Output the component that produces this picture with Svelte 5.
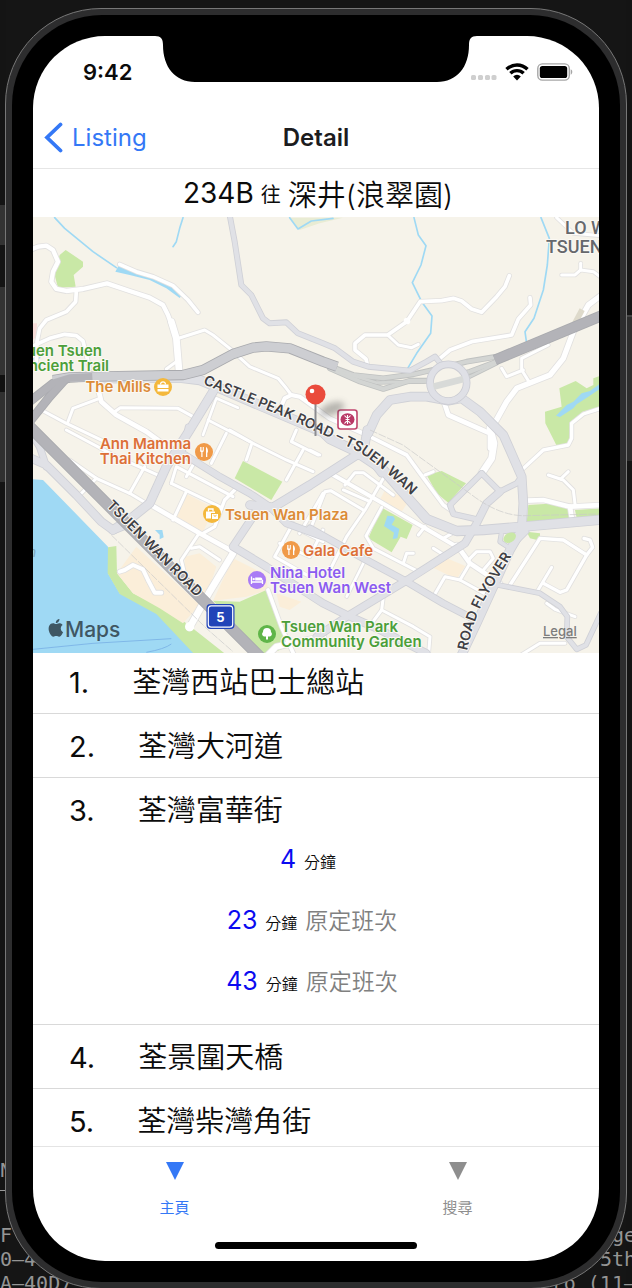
<script>
  const stops = [
    { n: 1, name: '荃灣西站巴士總站', etas: [] },
    { n: 2, name: '荃灣大河道', etas: [] },
    {
      n: 3,
      name: '荃灣富華街',
      etas: [
        { min: 4, remark: '' },
        { min: 23, remark: '原定班次' },
        { min: 43, remark: '原定班次' }
      ]
    },
    { n: 4, name: '荃景圍天橋', etas: [] },
    { n: 5, name: '荃灣柴灣角街', etas: [] }
  ];

  const tabs = [
    { label: '主頁', active: true },
    { label: '搜尋', active: false }
  ];

  // Map geometry is kept in four tiles, three units to a pixel.
  const tiles = {
    nw: 'translate(0 0)',
    ne: 'translate(831 0)',
    sw: 'translate(0 645)',
    se: 'translate(831 645)'
  };

  const areas = [
    { t: 'sw', c: '#9fd9f4', d: '0,148 30,150 225,350 225,430 260,490 370,550 500,675 0,675' },
    { t: 'sw', c: '#c9e8a6', d: '225,352 250,348 252,430 300,490 400,540 460,580 600,690 500,690 370,552 260,492 224,430' },
    { t: 'sw', c: '#fbeed9', d: '252,430 310,350 500,525 450,580 380,535 300,490' },
    { t: 'sw', c: '#fbeed9', d: '455,380 500,370 550,410 520,500 455,430' },
    { t: 'sw', c: '#fbeed9', d: '600,385 700,435 705,480 640,500 540,512' },
    { t: 'sw', c: '#fbeed9', d: '455,190 545,235 510,305 430,265' },
    { t: 'sw', c: '#fbeed9', d: '730,490 805,515 770,540 740,530' },
    { t: 'sw', c: '#c9e8a6', d: '540,512 620,515 700,480 715,485 765,650 690,680 660,640' },
    { t: 'sw', c: '#c9e8a6', d: '630,93 748,155 715,210 605,145' },
    { t: 'sw', c: '#9fd9f4', d: '366,300 388,300 392,322 380,328 380,314' },
    { t: 'nw', c: '#c9e8a6', d: '98,105 150,140 150,155 122,180 128,215 75,218 65,180 80,120' },
    { t: 'nw', c: '#f7dcd8', d: '0,325 12,325 10,365 0,375' },
    { t: 'nw', c: '#e9ecd4', d: '770,8 930,8 860,25 800,45' },
    { t: 'nw', c: '#9fd9f4', d: '258,150 300,168 360,185 420,210 447,240 440,249 400,220 350,195 290,180 247,170' },
    { t: 'ne', c: '#c9e8a6', d: '872,482 850,490 850,510 830,520 797,498 748,520 755,575 705,590 706,625 740,692 775,690 785,620 820,590 872,575' },
    { t: 'ne', c: '#9fd9f4', d: '872,505 840,528 815,535 790,560 770,570 738,602 750,606 790,580 800,568 835,545 872,520' },
    { t: 'se', c: '#c9e8a6', d: '350,135 395,123 468,160 415,218 380,190' },
    { t: 'se', c: '#c9e8a6', d: '655,225 740,220 775,240 785,265 650,278' },
    { t: 'se', c: '#c9e8a6', d: '795,240 872,235 872,256 800,264' },
    { t: 'se', c: '#c9e8a6', d: '650,305 690,310 690,332 660,325' },
    { t: 'se', c: '#c9e8a6', d: '215,233 308,285 290,327 272,320 245,367 175,325' },
    { t: 'se', c: '#9fd9f4', d: '232,257 250,259 255,268 245,284 268,297 262,325 248,327 252,308 222,288' },
    { t: 'se', c: '#fbeed9', d: '225,180 300,208 275,245 208,212' },
    { t: 'se', c: '#fbeed9', d: '400,380 466,408 440,447 372,415' }
  ];

  const streams = [
    { t: 'nw', d: '65,8 95,40 180,110 250,158' },
    { t: 'nw', d: '450,8 440,40 430,80 420,95' },
    { t: 'nw', d: '770,8 795,42 835,18 900,10' },
    { t: 'nw', d: '0,432 20,428' },
    { t: 'ne', d: '312,8 325,60 348,92 333,150 307,203 335,260 366,303 362,355 320,415 293,460' },
    { t: 'ne', d: '693,8 718,70 712,150 700,225 672,310 645,350 650,385' }
  ];

  const minor = [
    { t: 'nw', w: 13, d: '-10,105 15,95 40,92 60,105 75,140 60,170 55,200 70,222 100,228 150,222 222,205 290,228 350,248 390,270 405,300 430,370' },
    { t: 'nw', w: 20, d: '415,320 430,370 438,465' },
    { t: 'nw', w: 11, d: '260,148 310,170 360,185 420,212 465,255 495,292' },
    { t: 'nw', w: 11, d: '130,228 128,260 100,290 40,315 20,340 12,380 10,440' },
    { t: 'nw', w: 11, d: '-5,395 50,370 95,358 130,362 150,378 170,460' },
    { t: 'nw', w: 9, d: '430,372 515,345 540,360 590,400 650,455 735,490 760,520 775,540' },
    { t: 'nw', w: 12, d: '740,585 755,550 775,540 800,545 890,610 990,655' },
    { t: 'nw', w: 9, d: '400,462 430,440' },
    { t: 'nw', w: 14, d: '195,520 205,560 250,600 340,650 395,690' },
    { t: 'nw', w: 9, d: '105,620 120,580 200,550' },
    { t: 'nw', w: 9, d: '245,590 262,578 435,580 480,605' },
    { t: 'nw', w: 9, d: '25,585 100,625 215,680' },
    { t: 'nw', w: 8, d: '510,660 550,550 615,578' },
    { t: 'nw', w: 8, d: '525,615 650,680' },
    { t: 'ne', w: 11, d: '172,450 168,432 135,405 135,385 165,360 233,360 290,320 330,260 395,257 430,250 455,258 485,282 515,292 560,245 585,215 598,182' },
    { t: 'ne', w: 9, d: '233,360 265,390 305,398 325,388' },
    { t: 'ne', w: 11, d: '390,430 420,405 485,380 605,360 625,312 662,270 660,248' },
    { t: 'ne', w: 9, d: '715,390 635,430 635,465 660,505' },
    { t: 'ne', w: 9, d: '575,460 590,485 640,465' },
    { t: 'ne', w: 16, d: '875,240 835,270 790,350 760,430 720,480 620,520 590,560 540,650' },
    { t: 'ne', w: 14, d: '400,555 415,600 540,655 540,700' },
    { t: 'ne', w: 9, d: '740,8 790,55 870,62' },
    { t: 'ne', w: 9, d: '755,180 795,180 812,165 850,170 870,185' },
    { t: 'ne', w: 9, d: '812,165 812,145' },
    { t: 'ne', w: 10, d: '872,580 820,597 785,625 785,670 775,690 700,705 635,765' },
    { t: 'se', w: 20, d: '540,-5 552,40 545,85 515,130' },
    { t: 'se', w: 11, d: '180,20 290,75 330,130 400,225 430,245' },
    { t: 'se', w: 9, d: '345,135 370,125' },
    { t: 'se', w: 14, d: '650,212 700,210 780,230 870,225' },
    { t: 'se', w: 14, d: '780,230 785,262' },
    { t: 'se', w: 9, d: '795,222 790,180 760,150 715,135' },
    { t: 'se', w: 9, d: '752,147 775,125' },
    { t: 'se', w: 10, d: '600,465 690,325 760,330 830,375 770,480 750,487 700,460' },
    { t: 'se', w: 9, d: '680,487 725,412' },
    { t: 'se', w: 10, d: '830,375 848,352 840,330 822,325' },
    { t: 'se', w: 9, d: '710,520 735,538 795,560' },
    { t: 'se', w: 9, d: '625,680 690,640 765,640' },
    { t: 'se', w: 14, d: '440,345 480,400 570,460' },
    { t: 'se', w: 9, d: '480,400 450,450 405,440 370,500' },
    { t: 'se', w: 9, d: '450,450 540,500' },
    { t: 'se', w: 9, d: '480,385 500,365 540,365 550,385 520,420' },
    { t: 'se', w: 12, d: '70,135 210,215 320,280 440,350' },
    { t: 'se', w: 9, d: '220,145 165,240 110,320 60,420' },
    { t: 'se', w: 9, d: '0,300 45,185 62,182 160,240' },
    { t: 'se', w: 9, d: '105,165 135,128 160,128 250,195' },
    { t: 'se', w: 9, d: '100,180 180,215' },
    { t: 'se', w: 9, d: '215,232 168,318 190,355 325,425' },
    { t: 'se', w: 9, d: '345,290 325,315' },
    { t: 'se', w: 9, d: '370,355 410,380' },
    { t: 'se', w: 9, d: '280,400 290,370 310,370' },
    { t: 'se', w: 9, d: '400,325 435,305' },
    { t: 'se', w: 9, d: '220,500 215,540 310,590 360,620 355,680' },
    { t: 'se', w: 9, d: '215,540 185,580' },
    { t: 'se', w: 8, d: '165,390 110,500' },
    { t: 'se', w: 8, d: '0,60 30,75' },
    { t: 'sw', w: 9, d: '110,90 190,145 290,190 340,220' },
    { t: 'sw', w: 9, d: '190,145 140,195' },
    { t: 'sw', w: 9, d: '290,190 335,110' },
    { t: 'sw', w: 9, d: '100,0 250,80 385,140' },
    { t: 'sw', w: 14, d: '345,220 500,310 600,365' },
    { t: 'sw', w: 9, d: '415,160 430,110 600,200' },
    { t: 'sw', w: 9, d: '415,160 560,230' },
    { t: 'sw', w: 9, d: '460,185 420,270' },
    { t: 'sw', w: 9, d: '480,105 460,140' },
    { t: 'sw', w: 9, d: '535,100 580,10' },
    { t: 'sw', w: 10, d: '510,310 545,290 575,210 605,180' },
    { t: 'sw', w: 9, d: '495,315 445,390 455,430 480,470' },
    { t: 'sw', w: 9, d: '475,355 500,350 560,390' },
    { t: 'sw', w: 20, d: '600,370 530,485 470,592' },
    { t: 'sw', w: 12, d: '260,425 275,420 300,405 330,418 345,450 365,488 385,488' },
    { t: 'sw', w: 9, d: '590,0 660,40 760,90 840,125' },
    { t: 'sw', w: 9, d: '655,45 640,90' },
    { t: 'sw', w: 9, d: '810,60 760,150' },
    { t: 'sw', w: 9, d: '790,0 775,35 855,75' },
    { t: 'sw', w: 9, d: '780,280 725,380 830,440' },
    { t: 'sw', w: 9, d: '800,300 870,335' },
    { t: 'sw', w: 9, d: '870,190 800,310' },
    { t: 'sw', w: 9, d: '870,300 830,380 740,340' },
    { t: 'sw', w: 11, d: '705,480 745,590 790,690' },
    { t: 'sw', w: 18, d: '700,680 730,650 870,620' }
  ];

  const major = [
    { t: 'nw', w: 13, d: '590,0 605,80 625,210 655,240 690,310 710,325 760,322 795,355 870,385 906,400 960,440 1006,455 1131,467 1181,440 1206,425 1226,450' },
    { t: 'nw', w: 26, d: '210,490 440,488 500,495 560,520 870,652 891,672 961,705 1051,765 1121,845 1181,912 1271,948 1351,945 1471,935 1705,914' },
    { t: 'ne', w: 24, d: '175,655 200,600 240,555 300,545 350,545 415,557 455,550 510,590 580,660 600,705 635,785 640,865 635,945 600,1005 500,1225 450,1330' },
    { t: 'se', w: 24, d: '172,0 165,40 140,75 0,165 -111,232 -180,225' },
    { t: 'se', w: 20, d: '215,130 180,85 140,75' },
    { t: 'se', w: 14, d: '515,130 420,225 430,252 500,268' },
    { t: 'se', w: 14, d: '515,130 570,185 620,160 635,140' },
    { t: 'se', w: 20, d: '570,185 530,220 500,280 465,340 300,445 110,560 20,620' },
    { t: 'se', w: 18, d: '0,295 160,385 290,455 400,520 500,572' },
    { t: 'se', w: 12, d: '565,465 690,490 750,530 772,560 770,620 800,658 828,645 872,550' },
    { t: 'se', w: 11, d: '650,305 600,355 570,335 575,305 620,300' },
    { t: 'nw', w: 24, d: '540,530 470,645 400,755 350,865 300,905 240,945' },
    { t: 'sw', w: 18, d: '440,65 560,140 650,190 710,230 760,280 870,320' },
    { t: 'sw', w: 20, d: '680,220 660,260 600,350 700,410 870,520 941,555 1031,595 1180,670' },
    { t: 'sw', w: 22, d: '-5,85 40,105 130,195 205,275 240,300 290,280' },
    { t: 'sw', w: 18, d: '-5,10 20,50 40,110' },
    { t: 'sw', w: 14, d: '465,-10 450,60' }
  ];

  const rails = [
    { t: 'ne', w: 12, d: '50,450 130,480 220,490 310,478 390,460 470,440 560,425' },
    { t: 'ne', w: 12, d: '60,460 150,500 220,522 300,497 380,497 480,470 560,440' },
    { t: 'ne', w: 8, d: '90,470 200,503 340,500 480,485 560,445' }
  ];

  const highway = [
    { t: 'nw', w: 26, c: '#cdced2', d: '60,495 110,487 180,485 450,480 510,465 600,417 660,398 700,394 770,400 870,440 912,455' },
    { t: 'nw', w: 22, c: '#b3b3b8', d: '-10,560 60,505 110,489 178,485' },
    { t: 'nw', w: 22, c: '#b3b3b8', d: '-10,620 50,545 95,495' },
    { t: 'nw', w: 30, c: '#b3b3b8', d: '-20,625 200,845 520,1165 700,1345' },
    { t: 'ne', w: 28, c: '#b3b3b8', d: '555,435 875,302' }
  ];

  const pinLabels = [
    { x: 118, y: 175, c: '#dc8b37', a: 'end', lines: ['The Mills'] },
    { x: 158, y: 232, c: '#dd7038', a: 'end', lines: ['Ann Mamma', 'Thai Kitchen'] },
    { x: 192, y: 303, c: '#dc8b37', a: 'start', lines: ['Tsuen Wan Plaza'] },
    { x: 270, y: 339, c: '#dd7038', a: 'start', lines: ['Gala Cafe'] },
    { x: 237, y: 361, c: '#8b5cf0', a: 'start', lines: ['Nina Hotel', 'Tsuen Wan West'] },
    { x: 248, y: 415, c: '#4c9f3a', a: 'start', lines: ['Tsuen Wan Park', 'Community Garden'] },
    { x: 69, y: 139, c: '#4c9f3a', a: 'end', lines: ['Yuen Tsuen'] },
    { x: 76, y: 154, c: '#4c9f3a', a: 'end', lines: ['Ancient Trail'] }
  ];
</script>

{#snippet roads(list, kind)}
  <g class="{kind} casing">
    {#each list as r}
      <polyline points={r.d} transform={tiles[r.t]} stroke-width={r.w + 5} />
    {/each}
  </g>
  <g class="{kind} fill">
    {#each list as r}
      <polyline points={r.d} transform={tiles[r.t]} stroke-width={r.w} stroke={r.c} />
    {/each}
  </g>
{/snippet}

<div class="backdrop">
  <div class="code left" aria-hidden="true">
    <span class="ruled">N</span>
    <span>F</span>
    <span>0–40</span>
    <span>A–40D7</span>
  </div>
  <div class="code right" aria-hidden="true">
    <span>ge</span>
    <span>5th</span>
    <span>ro (11–</span>
  </div>

  <div class="device">
    <div class="bezel">
      <main class="screen">
        <svg class="notch" viewBox="0 0 322 46" aria-hidden="true">
          <path d="M0 0C6 0 8 3 8 9C8 31 20 46 40 46H282C302 46 314 31 314 9C314 3 316 0 322 0Z" />
        </svg>

        <div class="status">
          <time>9:42</time>
          <div class="signals">
            <svg width="26" height="18" viewBox="0 0 26 18" aria-hidden="true">
              <g fill="#cfcfcf">
                <rect x="0" y="12" width="5" height="5" rx="1.6" />
                <rect x="7" y="12" width="5" height="5" rx="1.6" />
                <rect x="14" y="12" width="5" height="5" rx="1.6" />
                <rect x="20.500" y="12" width="5" height="5" rx="1.6" />
              </g>
            </svg>
            <svg width="24" height="18" viewBox="0 0 24 18" aria-hidden="true">
              <g fill="none" stroke="#000" stroke-width="3.400">
                <path d="M1.500 6.300A15 15 0 0 1 22.500 6.300" />
                <path d="M5.400 10.300A9.400 9.400 0 0 1 18.600 10.300" />
              </g>
              <path d="M8.200 13.400A5.400 5.400 0 0 1 15.800 13.400L12 17.400Z" />
            </svg>
            <svg width="36" height="18" viewBox="0 0 36 18" aria-hidden="true">
              <rect x="0.800" y="0.900" width="31.500" height="16.200" rx="4.600" fill="none" stroke="#a6a6a6" stroke-width="1.400" />
              <rect x="2.800" y="3" width="27.400" height="12" rx="2.600" />
              <path d="M33.700 6.300C35.800 7 35.800 11 33.700 11.700Z" fill="#a6a6a6" />
            </svg>
          </div>
        </div>

        <header class="nav">
          <button class="back" type="button">
            <svg width="20" height="32" viewBox="0 0 20 32" aria-hidden="true">
              <path d="M16.500 2.500L3 15.500L16.500 28.500" fill="none" stroke="#3478f6" stroke-width="3.800" stroke-linecap="round" stroke-linejoin="miter" />
            </svg>
            <span>Listing</span>
          </button>
          <h1>Detail</h1>
        </header>

        <h2 class="route">
          <span>234B</span><small>往</small><span>深井(浪翠園)</span>
        </h2>

        <svg class="map" viewBox="0 0 566 436" preserveAspectRatio="xMidYMid slice" role="img" aria-label="Tsuen Wan">
          <rect width="566" height="436" fill="#f6f3ea" />
          <g transform="translate(0 -2) scale(0.33333)">
            {#each areas as a}
              <polygon points={a.d} fill={a.c} transform={tiles[a.t]} />
            {/each}
            <g fill="none" stroke="#7fb8e8" stroke-width="3">
              <path d="M0 1303L180 1285L415 1271" />
              <path d="M340 1312Q395 1302 415 1287" />
            </g>
            <g class="stream">
              {#each streams as s}
                <polyline points={s.d} transform={tiles[s.t]} />
              {/each}
            </g>
            {@render roads(minor, 'minor')}
            <circle cx="470" cy="1235" r="14" fill="#fff" />
            <circle cx="1122" cy="318" r="10" fill="#fff" />
            {@render roads(rails, 'rail')}
            {@render roads(major, 'major')}
            <circle cx="1246" cy="503" r="55" fill="#f6f3ea" stroke="#cbccd3" stroke-width="23" />
            <path d="M1200 515L1292 492" stroke="#d8dad8" stroke-width="20" />
            <circle cx="1246" cy="503" r="55" fill="none" stroke="#dfe0e6" stroke-width="18" />
            <ellipse cx="1430" cy="968" rx="20" ry="14" transform="rotate(-30 1430 968)" fill="#c9e8a6" />
            <path d="M1640 280L1655 288L1628 340L1612 332Z" fill="#dedacb" />
            {@render roads(highway, 'highway')}
            <g class="track">
              <path d="M235 960L520 1240L600 1310" />
              <path d="M1011 645L1110 690L1310 835Q1400 905 1480 902L1698 897" />
            </g>
          </g>

          <path id="castle" d="M170 167Q205 181 254 201Q300 222 326 235Q352 252 384 284Q400 302 420 326" fill="none" />
          <path id="tsuen" d="M73 289L190 407" fill="none" />
          <path id="flyover" d="M434 434Q441 401 452 382L500 304" fill="none" />
          <g class="street">
            <text><textPath href="#castle">CASTLE PEAK ROAD – TSUEN WAN</textPath></text>
            <text><textPath href="#tsuen">TSUEN WAN ROAD</textPath></text>
            <text><textPath href="#flyover">ROAD FLYOVER</textPath></text>
          </g>
          <g class="district">
            <text x="532" y="17">LO WAI</text>
            <text x="513" y="36">TSUEN WAN</text>
          </g>
          <text x="-5" y="340" class="bay">n</text>

          <g class="poi">
            {#each pinLabels as p}
              <text fill={p.c} text-anchor={p.a}>
                {#each p.lines as line, i}
                  <tspan x={p.x} y={p.y + i * 15}>{line}</tspan>
                {/each}
              </text>
            {/each}
          </g>

          <g transform="translate(130 170)">
            <circle r="9" fill="#f4b83c" />
            <path d="M-5.500 -2.500H5.500V1H-5.500ZM-5.500 2H5.500V4.500H-5.500Z" fill="#fff" />
            <path d="M-2.500 -2.500C-2.500 -6 2.500 -6 2.500 -2.500" fill="none" stroke="#fff" stroke-width="1.200" />
          </g>
          {#each [[171, 235], [258, 333]] as [x, y]}
            <g transform="translate({x} {y})">
              <circle r="9" fill="#f09a48" />
              <path d="M-4 -5V-1.500Q-4 0 -2.700 0V5H-1.500V0Q-0.200 0 -0.200 -1.500V-5H-1V-1.500H-1.700V-5H-2.500V-1.500H-3.200V-5Z" fill="#fff" />
              <path d="M2 5V-5Q4.300 -4 3.900 0.500H3.300V5Z" fill="#fff" />
            </g>
          {/each}
          <g transform="translate(179 297)">
            <circle r="9" fill="#f4b83c" />
            <path d="M-6 -2.500H3V-1H-1V4.500H-6ZM0 0H6V5H0Z" fill="#fff" />
            <path d="M-3.500 -2.500V-5H1V-2.500" fill="none" stroke="#fff" stroke-width="1.300" />
            <path d="M1.500 1.200Q3 3.600 4.500 1.200" fill="none" stroke="#f4b83c" />
          </g>
          <g transform="translate(224 363)">
            <circle r="9" fill="#a97bf5" />
            <path d="M-5.500 -3.500V4M-5.500 2H5.500M5.500 4V0" fill="none" stroke="#fff" stroke-width="1.300" />
            <path d="M-1.800 -2.500H3.500Q5.500 -2.500 5.500 0.500H-1.800Z" fill="#fff" />
            <circle cx="-3.300" cy="-0.900" r="1.200" fill="#fff" />
          </g>
          <g transform="translate(234 417)">
            <circle r="9" fill="#5fb548" />
            <path d="M-1 5.500V2.500H-3A2.600 2.600 0 0 1 -4 -2A4 4 0 0 1 4 -2A2.600 2.600 0 0 1 3 2.500H1V5.500Z" fill="#fff" />
          </g>

          <g transform="translate(187.500 399.500)">
            <rect x="-14" y="-12.500" width="28" height="25" rx="4" fill="#2244b8" />
            <rect x="-12.200" y="-10.700" width="24.400" height="21.400" rx="3" fill="none" stroke="#fff" stroke-width="1.200" />
            <text class="shield" y="5" text-anchor="middle">5</text>
          </g>

          <g transform="translate(314.500 202.500)">
            <rect x="-9.500" y="-9.500" width="19" height="19" rx="2.500" fill="#fff" stroke="#c0456d" stroke-width="1.600" />
            <ellipse rx="7" ry="6.200" fill="#b93866" />
            <path d="M0 -4.500V4.500M-3 -4Q0 0.500 3 -4M-3 4Q0 -0.500 3 4M-2 0H2" fill="none" stroke="#fff" stroke-width="1.100" />
          </g>

          <ellipse class="shade" cx="299" cy="192" rx="13" ry="6" transform="rotate(-20 299 192)" />
          <path d="M282.500 186V219" stroke="#8c8c90" stroke-width="2" />
          <circle cx="282.500" cy="177.500" r="10" fill="#ea4b3c" />
          <circle cx="279" cy="174" r="2.300" fill="#fff" />

          <g class="brand">
            <path transform="translate(14 402) scale(0.74)" d="M12.152 6.896c-.948 0-2.415-1.078-3.960-1.040-2.040.027-3.910 1.183-4.961 3.014-2.117 3.675-.546 9.103 1.519 12.090 1.013 1.454 2.208 3.090 3.792 3.039 1.520-.065 2.090-.987 3.935-.987 1.831 0 2.350.987 3.960.948 1.637-.026 2.676-1.480 3.676-2.948 1.156-1.688 1.636-3.325 1.662-3.415-.039-.013-3.182-1.221-3.220-4.857-.026-3.040 2.480-4.494 2.597-4.559-1.429-2.090-3.623-2.324-4.390-2.376-2-.156-3.675 1.090-4.610 1.090zM15.530 3.830c.843-1.012 1.400-2.427 1.245-3.830-1.207.052-2.662.805-3.532 1.818-.780.896-1.454 2.338-1.273 3.714 1.338.104 2.715-.688 3.559-1.701" />
            <text x="32" y="420">Maps</text>
          </g>
          <a href="#legal"><text class="legal" x="510" y="419">Legal</text></a>
        </svg>

        <ol class="stops">
          {#each stops as s}
            <li>
              <div class="stop"><span>{s.n}.</span><span>{s.name}</span></div>
              {#if s.etas.length}
                <div class="etas">
                  {#each s.etas as e}
                    <p><b>{e.min}</b><small>分鐘</small><i>{e.remark}</i></p>
                  {/each}
                </div>
              {/if}
            </li>
          {/each}
        </ol>

        <nav class="tabs">
          {#each tabs as t}
            <a href="#tab" class:active={t.active}>
              <svg width="18" height="18" viewBox="0 0 18 18" aria-hidden="true"><path d="M0 0H18L9 18Z" fill="currentColor" /></svg>
              <span>{t.label}</span>
            </a>
          {/each}
        </nav>
        <div class="indicator"></div>
      </main>
    </div>
  </div>
</div>

<style>
  :global(body) {
    background: #151515;
  }
  .backdrop {
    position: relative;
    box-sizing: border-box;
    min-height: 100vh;
    padding: 8px 5px 0;
    overflow: hidden;
    font-family: Inter, 'Noto Sans CJK TC', sans-serif;
    background:
      linear-gradient(#141414 205px, #333 205px 245px, #141414 245px 287px, #333 287px 375px, #111 375px 392px, #303030 392px 482px, #141414 482px) left / 6px 100% no-repeat,
      linear-gradient(#141414 315px, #444 315px 317px, #2c2c2c 317px 461px, #141414 461px) right / 6px 100% no-repeat,
      #151515;
  }
  .code {
    position: absolute;
    bottom: -6px;
    display: flex;
    flex-direction: column;
    font: 20px/24px 'DejaVu Sans Mono', monospace;
    color: #959595;
    white-space: pre;
  }
  .left {
    left: 0;
  }
  .right {
    right: -4px;
    align-items: flex-end;
  }
  .ruled {
    height: 32px;
    margin-bottom: 32px;
    border-bottom: 1px solid #999;
  }
  .device {
    position: relative;
    padding: 6px;
    border: 1px solid #777;
    border-radius: 96px;
    background: #2d2d2e;
  }
  .bezel {
    padding: 21px;
    border-radius: 90px;
    background: #000;
  }
  .screen {
    position: relative;
    overflow: hidden;
    border-radius: 72px;
    background: #fff;
    color: #0b0b0b;
  }
  .notch {
    position: absolute;
    top: 0;
    left: 50%;
    width: 322px;
    height: 46px;
    transform: translateX(-50%);
  }
  .status {
    display: flex;
    align-items: center;
    justify-content: space-between;
    height: 72px;
    padding: 0 26px 0 50px;
  }
  .status time {
    font-size: 22px;
    font-weight: 600;
    line-height: 28px;
  }
  .signals {
    display: flex;
    gap: 8px;
  }
  .nav {
    display: grid;
    grid-template-columns: 1fr auto 1fr;
    align-items: center;
    height: 60px;
    padding: 0 11px;
    border-bottom: 1px solid #e6e6e6;
  }
  .back {
    display: flex;
    align-items: center;
    gap: 8px;
    justify-self: start;
    padding: 0;
    border: 0;
    background: none;
    color: #3478f6;
    font: 24px/30px Inter, sans-serif;
  }
  h1 {
    margin: 0;
    font-size: 24px;
    font-weight: 600;
    line-height: 30px;
    color: #1c1c1e;
  }
  .route {
    display: flex;
    align-items: center;
    justify-content: center;
    gap: 7px;
    height: 48px;
    margin: 0;
    padding-left: 4px;
    font-size: 28px;
    font-weight: 400;
  }
  .route small {
    font-size: 20px;
  }
  .route span:last-child {
    font-size: 29px;
    font-weight: 350;
  }
  .map {
    display: block;
    width: 100%;
    height: 436px;
  }
  .map polyline {
    fill: none;
    stroke-linejoin: round;
    stroke-linecap: round;
  }
  .stream polyline {
    stroke: #9fd9f4;
    stroke-width: 5;
  }
  .minor.casing {
    stroke: #e2e1e0;
  }
  .minor.fill {
    stroke: #fff;
  }
  .major.casing {
    stroke: #cfd0d6;
  }
  .major.fill {
    stroke: #e0e1e6;
  }
  .rail.casing {
    stroke: #bfc1c0;
  }
  .rail.fill {
    stroke: #d3d5d3;
  }
  .highway.casing {
    stroke: #a9aaae;
  }
  .highway polyline {
    stroke-linecap: butt;
  }
  .track path {
    fill: none;
    stroke: #c9c9c9;
    stroke-width: 2;
    stroke-dasharray: 24 4;
  }
  .street text,
  .district text,
  .poi text {
    paint-order: stroke;
    stroke: #fbf9f4;
    stroke-width: 2px;
    stroke-linejoin: round;
  }
  .street text {
    font-size: 14px;
    font-weight: 600;
    fill: #3f4045;
  }
  .district text {
    font-family: Roboto, sans-serif;
    font-size: 18px;
    font-weight: 500;
    fill: #66686c;
  }
  .bay {
    font-size: 14px;
    font-style: italic;
    fill: #7fa9bd;
  }
  .poi text {
    font-size: 15px;
    font-weight: 600;
  }
  .shield {
    font-size: 13px;
    font-weight: 700;
    fill: #fff;
  }
  .shade {
    fill: #555;
    opacity: 0.4;
    filter: blur(3px);
  }
  .brand {
    fill: #3f5763;
    font-size: 21px;
    font-weight: 500;
  }
  .legal {
    font-size: 13px;
    font-weight: 500;
    fill: #7c7c7c;
    text-decoration: underline;
  }
  .stops {
    height: 493px;
    margin: 0;
    padding: 0;
    overflow: hidden;
    list-style: none;
  }
  .stops li {
    padding: 13px 36px 10px;
    border-bottom: 1px solid #d9d9d9;
  }
  .stops li:first-child {
    margin-top: -3px;
  }
  .stop {
    display: flex;
    gap: 43px;
    font-size: 29px;
    font-weight: 350;
    line-height: 40px;
  }
  .stop span:first-child {
    font-weight: 400;
  }
  .etas {
    padding: 0 8px 0 0;
  }
  .etas p {
    display: flex;
    align-items: baseline;
    justify-content: center;
    gap: 8px;
    height: 61px;
    margin: 0;
    line-height: 56px;
  }
  .etas b {
    font-size: 25px;
    font-weight: 400;
    color: #0b0bf0;
  }
  .etas small {
    font-size: 16px;
    font-weight: 350;
  }
  .etas i {
    font-size: 23px;
    font-style: normal;
    font-weight: 350;
    color: #808080;
  }
  .tabs {
    display: flex;
    height: 114px;
    border-top: 1px solid #e4e4e4;
  }
  .tabs a {
    display: flex;
    flex: 1;
    flex-direction: column;
    align-items: center;
    gap: 18px;
    padding-top: 15px;
    color: #8e8e8e;
    font-size: 15px;
    line-height: 20px;
    text-decoration: none;
  }
  .tabs a.active {
    color: #3478f6;
  }
  .indicator {
    position: absolute;
    bottom: 12px;
    left: 50%;
    width: 202px;
    height: 7px;
    border-radius: 4px;
    background: #000;
    transform: translateX(-50%);
  }
</style>
